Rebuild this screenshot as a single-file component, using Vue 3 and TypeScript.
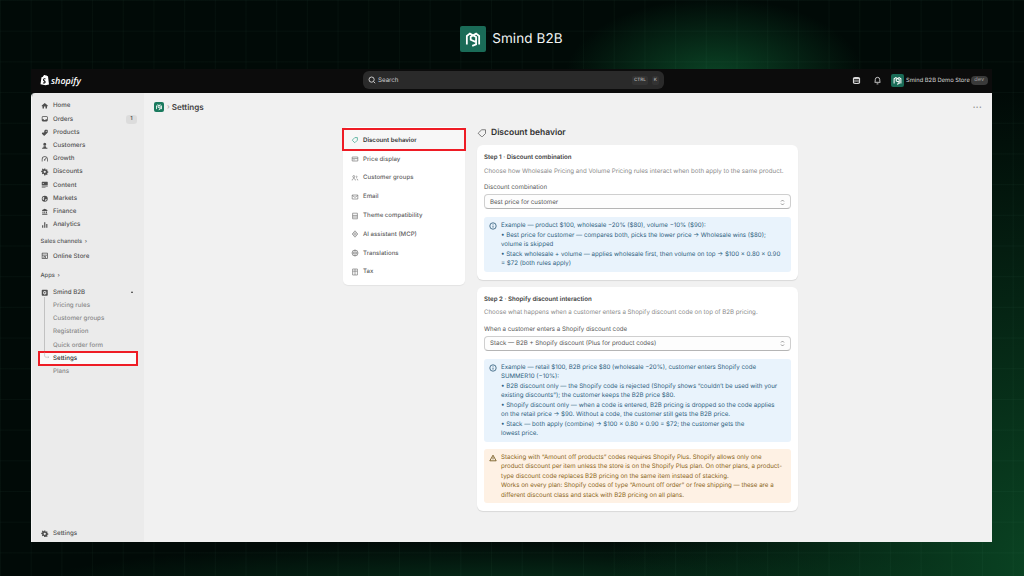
<template>
  <div class="page">
    <header class="brand">
      <span class="brand-logo">
        <svg viewBox="0 0 26 26" width="20" height="20" fill="none" stroke="#fff" stroke-width="2.300">
          <path :d="markPath" />
        </svg>
      </span>
      <span class="brand-name">Smind B2B</span>
    </header>

    <div class="frame">
      <div class="topbar">
        <div class="shop">
          <svg viewBox="0 0 20 22" width="10" height="12">
            <path fill="#fff" d="M3 5.500 6 4.600C6.600 2 8 .8 9.500.8c1 0 1.500.5 1.800 1.200l1.200-.3L14 3l2 .4L18 20l-7 1.500L1 19.600z" />
            <path fill="#0c0c0c" d="M11.200 8.200 10.500 10c-2-.8-3.300.1-2.500 1 1 1.100 3.600 1.500 3.300 4.300-.3 2.600-3.600 3.300-5.700 2l.6-1.900c1.200.8 3 .9 3-.3 0-1.400-3.300-1.500-3.300-4.300 0-2.700 3.100-3.900 5.300-2.600z" />
          </svg>
          <span>shopify</span>
        </div>
        <div class="search">
          <svg viewBox="0 0 20 20" width="8" height="8" fill="none" stroke="#ddd" stroke-width="2.200">
            <circle cx="9" cy="9" r="6.500" />
            <path d="m14 14 4 4" />
          </svg>
          <span class="search-text">Search</span>
          <span class="key">CTRL</span>
          <span class="key">K</span>
        </div>
        <div class="top-right">
          <svg class="db" viewBox="0 0 20 20" width="9" height="9">
            <path fill="#d8d8d8" fill-rule="evenodd" d="M10 2c4.500 0 8 1 8 3v10c0 2-3.500 3-8 3s-8-1-8-3V5c0-2 3.500-3 8-3zM4.500 7v3h11V7zm0 5v2.500c1 .7 3 1 5.500 1s4.500-.3 5.500-1V12z" />
          </svg>
          <svg class="bell" viewBox="0 0 20 20" width="9" height="9" fill="none" stroke="#d8d8d8" stroke-width="2">
            <path d="M4 14c1-1.500 1-3 1-6a5 5 0 0 1 10 0c0 3 0 4.500 1 6zM8 17.500h4" />
          </svg>
          <span class="store-logo">
            <svg viewBox="0 0 26 26" width="11" height="11" fill="none" stroke="#fff" stroke-width="2.500">
              <path :d="markPath" />
            </svg>
          </span>
          <span class="store-name">Smind B2B Demo Store</span>
          <span class="dev">dev</span>
        </div>
      </div>

      <div class="body">
        <aside class="sidebar">
          <a v-for="item in mainNav" :key="item.label" class="nav-row">
            <svg class="nav-icon" viewBox="0 0 20 20"><path fill-rule="evenodd" :d="item.icon" /></svg>
            <span>{{ item.label }}</span>
            <span v-if="item.badge" class="badge">{{ item.badge }}</span>
          </a>

          <div class="section-label first">Sales channels <i>›</i></div>
          <a class="nav-row">
            <svg class="nav-icon" viewBox="0 0 20 20"><path fill-rule="evenodd" :d="storeIcon" /></svg>
            <span>Online Store</span>
          </a>

          <div class="section-label second">Apps <i>›</i></div>
          <a class="nav-row app-row">
            <svg class="nav-icon" viewBox="0 0 20 20"><path fill-rule="evenodd" :d="appIcon" /></svg>
            <span>Smind B2B</span>
            <span class="pin"></span>
          </a>
          <div class="subnav">
            <a v-for="item in appNav" :key="item" class="sub-row" :class="{ active: item === 'Settings' }">
              <svg v-if="item === 'Settings'" class="elbow" viewBox="0 0 10 12" width="6" height="8" fill="none" stroke="#b5b5b5" stroke-width="1">
                <path d="M1 0v6c0 1 1 2 2 2h5M6.500 6.500 8 8 6.500 9.500" />
              </svg>
              {{ item }}
            </a>
          </div>

          <a class="nav-row foot">
            <svg class="nav-icon" viewBox="0 0 20 20"><path fill-rule="evenodd" :d="gearIcon" /></svg>
            <span>Settings</span>
          </a>
        </aside>

        <main class="content">
          <div class="title-bar">
            <span class="title-logo">
              <svg viewBox="0 0 26 26" width="8" height="8" fill="none" stroke="#fff" stroke-width="2.800">
                <path :d="markPath" />
              </svg>
            </span>
            <span class="crumb">›</span>
            <h1>Settings</h1>
            <span class="more">···</span>
          </div>

          <div class="layout">
            <nav class="side-card">
              <a v-for="(item, i) in settingsNav" :key="item.label" class="set-row" :class="{ current: i === 0 }">
                <svg viewBox="0 0 20 20" width="8" height="8" fill="none" :stroke="i === 0 ? '#2a9d84' : '#777'" stroke-width="1.700">
                  <path :d="item.icon" />
                </svg>
                <span>{{ item.label }}</span>
              </a>
            </nav>

            <section class="panel">
              <h2>
                <svg viewBox="0 0 20 20" width="10" height="10" fill="none" stroke="#555" stroke-width="1.500">
                  <path d="M3 9.500 9.500 3.500H17v7.500l-6 6a1.500 1.500 0 0 1-2 0l-6-5.500a1.500 1.500 0 0 1 0-2z" />
                </svg>
                Discount behavior
              </h2>

              <div class="card">
                <h3>Step 1 · Discount combination</h3>
                <p class="desc">Choose how Wholesale Pricing and Volume Pricing rules interact when both apply to the same product.</p>
                <label>Discount combination</label>
                <div class="select">
                  <span>Best price for customer</span>
                  <svg viewBox="0 0 10 14" width="5" height="7" fill="none" stroke="#666" stroke-width="1.300">
                    <path d="M2 5l3-3 3 3M2 9l3 3 3-3" />
                  </svg>
                </div>
                <div class="note info">
                  <svg viewBox="0 0 20 20" width="8" height="8" fill="none" stroke="#1f4f6f" stroke-width="1.900">
                    <circle cx="10" cy="10" r="8" />
                    <path d="M10 9v5M10 5.500v1.500" />
                  </svg>
                  <p>
                    Example — product $100, wholesale −20% ($80), volume −10% ($90):<br />
                    • Best price for customer — compares both, picks the lower price → Wholesale wins ($80);<br />
                    volume is skipped<br />
                    • Stack wholesale + volume — applies wholesale first, then volume on top → $100 × 0.80 × 0.90<br />
                    = $72 (both rules apply)
                  </p>
                </div>
              </div>

              <div class="card">
                <h3>Step 2 · Shopify discount interaction</h3>
                <p class="desc">Choose what happens when a customer enters a Shopify discount code on top of B2B pricing.</p>
                <label>When a customer enters a Shopify discount code</label>
                <div class="select">
                  <span>Stack — B2B + Shopify discount (Plus for product codes)</span>
                  <svg viewBox="0 0 10 14" width="5" height="7" fill="none" stroke="#666" stroke-width="1.300">
                    <path d="M2 5l3-3 3 3M2 9l3 3 3-3" />
                  </svg>
                </div>
                <div class="note info">
                  <svg viewBox="0 0 20 20" width="8" height="8" fill="none" stroke="#1f4f6f" stroke-width="1.900">
                    <circle cx="10" cy="10" r="8" />
                    <path d="M10 9v5M10 5.500v1.500" />
                  </svg>
                  <p>
                    Example — retail $100, B2B price $80 (wholesale −20%), customer enters Shopify code<br />
                    SUMMER10 (−10%):<br />
                    • B2B discount only — the Shopify code is rejected (Shopify shows “couldn’t be used with your<br />
                    existing discounts”); the customer keeps the B2B price $80.<br />
                    • Shopify discount only — when a code is entered, B2B pricing is dropped so the code applies<br />
                    on the retail price → $90. Without a code, the customer still gets the B2B price.<br />
                    • Stack — both apply (combine) → $100 × 0.80 × 0.90 = $72; the customer gets the<br />
                    lowest price.
                  </p>
                </div>
                <div class="note warn">
                  <svg viewBox="0 0 20 20" width="8" height="8" fill="none" stroke="#5e4200" stroke-width="1.900">
                    <path d="M10 3 18 17H2z" stroke-linejoin="round" />
                    <path d="M10 8v4.500M10 14v1" />
                  </svg>
                  <p>
                    Stacking with “Amount off products” codes requires Shopify Plus. Shopify allows only one<br />
                    product discount per item unless the store is on the Shopify Plus plan. On other plans, a product-<br />
                    type discount code replaces B2B pricing on the same item instead of stacking.<br />
                    Works on every plan: Shopify codes of type “Amount off order” or free shipping — these are a<br />
                    different discount class and stack with B2B pricing on all plans.
                  </p>
                </div>
              </div>
            </section>
          </div>
        </main>
      </div>
    </div>
  </div>
</template>

<script setup lang="ts">
interface NavItem {
  label: string
  icon: string
  badge?: string
}

const markPath = 'M5 20V9l4-3 8 4.500V20l-5 2M21 20V9l-4-3-7 4v4l7 3'

const gearIcon =
  'M8.500 1.500h3l.5 2.300 1.600.7 2-1.300 2.100 2.100-1.300 2 .7 1.600 2.300.5v3l-2.300.5-.7 1.600 1.300 2-2.100 2.100-2-1.300-1.600.7-.5 2.300h-3L8 16.200l-1.600-.7-2 1.300-2.100-2.100 1.300-2-.7-1.600-2.300-.5v-3l2.300-.5.7-1.600-1.300-2 2.100-2.100 2 1.300L8 3.800zM10 7a3 3 0 1 0 0 6 3 3 0 0 0 0-6z'
const storeIcon =
  'M3 2h14a1 1 0 0 1 1 1v14a1 1 0 0 1-1 1H3a1 1 0 0 1-1-1V3a1 1 0 0 1 1-1zm1 2v3h12V4zm0 5v7h3v-5h6v5h3V9zm5 4v3h2v-3z'
const appIcon =
  'M4 2h12a2 2 0 0 1 2 2v12a2 2 0 0 1-2 2H4a2 2 0 0 1-2-2V4a2 2 0 0 1 2-2zm6 3-4 2.500v5L10 15l4-2.500v-5zm0 3a2 2 0 1 1 0 4 2 2 0 0 1 0-4z'

const mainNav: NavItem[] = [
  { label: 'Home', icon: 'M10 2.500 18 9v2h-2v6h-4v-5H8v5H4v-6H2V9z' },
  {
    label: 'Orders',
    badge: '1',
    icon: 'M5 3h10a3 3 0 0 1 3 3v8a3 3 0 0 1-3 3H5a3 3 0 0 1-3-3V6a3 3 0 0 1 3-3zm-1 8h3.500l1 2h3l1-2H16V6a1 1 0 0 0-1-1H5a1 1 0 0 0-1 1z',
  },
  {
    label: 'Products',
    icon: 'M11 2h5a2 2 0 0 1 2 2v5l-8 8.500a2 2 0 0 1-2.800 0L3 13.500a2 2 0 0 1 0-2.800l2-2 3 1 1-3-1-1zm3 2.500a1.500 1.500 0 1 0 0 3 1.500 1.500 0 0 0 0-3z',
  },
  { label: 'Customers', icon: 'M10 2a4 4 0 1 1 0 8 4 4 0 0 1 0-8zM7 11h6l1 4h3v3H3v-3h3z' },
  {
    label: 'Growth',
    icon: 'M10 3a8 8 0 0 1 8 8v6h-2v-6a6 6 0 0 0-12 0v6H2v-6a8 8 0 0 1 8-8zm3.500 4 1 1-3 4a2 2 0 1 1-2-1z',
  },
  { label: 'Discounts', icon: gearIcon },
  {
    label: 'Content',
    icon: 'M3 2h14a1 1 0 0 1 1 1v8a1 1 0 0 1-1 1H3a1 1 0 0 1-1-1V3a1 1 0 0 1 1-1zm3 3a1.500 1.500 0 1 0 0 3 1.500 1.500 0 0 0 0-3zM2 14h16v1.500H2zm0 2.500h10V18H2z',
  },
  {
    label: 'Markets',
    icon: 'M10 2a8 8 0 1 1 0 16 8 8 0 0 1 0-16zM7 4.500A6 6 0 0 0 4.500 12l3 1 1-3-2-2 3-1zm5 6-1.500 5.500a6 6 0 0 0 5-5z',
  },
  { label: 'Finance', icon: 'M10 2l7 3v3H3V5zM4 9.500h2.500V14H4zm4.700 0h2.600V14H8.700zm4.800 0H16V14h-2.500zM3 15h14v3H3z' },
  { label: 'Analytics', icon: 'M3 11h3v7H3zM8.500 3h3v15h-3zM14 8h3v10h-3z' },
]

const appNav = ['Pricing rules', 'Customer groups', 'Registration', 'Quick order form', 'Settings', 'Plans']

const settingsNav: NavItem[] = [
  { label: 'Discount behavior', icon: 'M4 9.500 9.500 4H16v6.500L10.500 16a1.500 1.500 0 0 1-2 0L4 11.500a1.500 1.500 0 0 1 0-2z' },
  { label: 'Price display', icon: 'M3 5h14v10H3zM3 9h14M6 12h3' },
  { label: 'Customer groups', icon: 'M7 4a2.500 2.500 0 1 1 0 5 2.500 2.500 0 0 1 0-5zM3 16c0-3 1.500-4.500 4-4.500s4 1.500 4 4.500M13 5a2 2 0 0 1 0 4M14 12c2 .3 3 1.800 3 4' },
  { label: 'Email', icon: 'M3 5h14v10H3zM3 6l7 5 7-5' },
  { label: 'Theme compatibility', icon: 'M4 3h12v14H4zM4 8.500h12M4 12.500h12' },
  { label: 'AI assistant (MCP)', icon: 'M10 2l7 8-7 8-7-8zM10 7a3 3 0 1 0 0 6 3 3 0 0 0 0-6z' },
  { label: 'Translations', icon: 'M10 2.500a7.500 7.500 0 1 1 0 15 7.500 7.500 0 0 1 0-15zM2.500 10h15M10 2.500c-4 4-4 11 0 15M10 2.500c4 4 4 11 0 15' },
  { label: 'Tax', icon: 'M4 2.500h12v15H4zM10 2.500v15M4 8h12M7 12h.500' },
]
</script>

<style>
html,
body {
  margin: 0;
  background: #010806;
}
</style>

<style scoped>
* {
  box-sizing: border-box;
}

.page {
  width: 1024px;
  height: 576px;
  overflow: hidden;
  padding: 0 32px 34px 31px;
  display: flex;
  flex-direction: column;
  font-family: Inter, "Liberation Sans", sans-serif;
  text-rendering: geometricPrecision;
  background-color: #010a07;
  background-image:
    linear-gradient(rgba(120, 200, 160, 0.04) 1px, transparent 1px),
    linear-gradient(90deg, rgba(120, 200, 160, 0.04) 1px, transparent 1px),
    radial-gradient(ellipse 150px 80px at 715px 78px, #0b4526 0%, rgba(11, 69, 38, 0) 100%),
    radial-gradient(ellipse 430px 480px at 1040px 570px, #0a4423 0%, rgba(10, 68, 35, 0) 100%),
    radial-gradient(ellipse 500px 50px at 520px 590px, #07301b 0%, rgba(7, 48, 27, 0) 100%);
  background-size: 30.7px 30.7px, 30.7px 30.7px, 100% 100%, 100% 100%, 100% 100%;
}

.brand {
  height: 69px;
  flex-shrink: 0;
  display: flex;
  align-items: center;
  justify-content: center;
  gap: 6px;
  padding: 9px 0 0;
}

.brand-logo {
  width: 26px;
  height: 26px;
  border-radius: 2px;
  background: #1a6b57;
  display: flex;
  align-items: center;
  justify-content: center;
}

.brand-name {
  color: #f2f5f4;
  font-size: 13.500px;
  letter-spacing: 0.1px;
}

.frame {
  flex: 1;
  min-height: 0;
  display: flex;
  flex-direction: column;
}

.topbar {
  height: 24px;
  flex-shrink: 0;
  background: #0c0c0c;
  display: grid;
  grid-template-columns: 332px 301px 1fr;
  align-items: center;
  padding-bottom: 2px;
}

.shop {
  display: flex;
  align-items: center;
  gap: 1px;
  padding-left: 9px;
  color: #fff;
  font-family: "Open Sans", sans-serif;
  font-size: 9px;
  font-style: italic;
  font-weight: 600;
}

.search {
  height: 18px;
  border-radius: 6px;
  background: #2a2a2a;
  display: flex;
  align-items: center;
  padding: 0 5px;
  color: #cfcfcf;
  font-size: 6.200px;
}

.search-text {
  flex: 1;
  margin-left: 2px;
}

.key {
  font-size: 4.500px;
  font-weight: 600;
  color: #a8a8a8;
  background: #333;
  border-radius: 2px;
  padding: 2px 2px;
  margin-left: 4px;
}

.top-right {
  display: flex;
  align-items: center;
  padding-left: 188px;
}

.bell {
  margin-left: 12px;
}

.store-logo {
  width: 13px;
  height: 13px;
  border-radius: 2px;
  background: #1a6b57;
  margin-left: 9px;
  display: flex;
  align-items: center;
  justify-content: center;
}

.store-name {
  color: #d8d8d8;
  font-size: 5.800px;
  white-space: nowrap;
  margin-left: 2px;
}

.dev {
  margin-left: 1px;
  padding: 1px 3.500px;
  height: 9px;
  line-height: 7px;
  border-radius: 4px;
  background: #3a3a3a;
  color: #a0a0a0;
  font-size: 5.600px;
}

.body {
  flex: 1;
  min-height: 0;
  display: flex;
  border-radius: 4px 0 0 0;
  overflow: hidden;
  border-left: 1px solid #f6f6f6;
}

.sidebar {
  width: 112px;
  flex-shrink: 0;
  background: #ebebeb;
  display: flex;
  flex-direction: column;
  padding: 6.400px 7px 2px 7px;
  font-size: 6.200px;
  color: #555;
}

.nav-row {
  height: 13.200px;
  flex-shrink: 0;
  display: flex;
  align-items: center;
  gap: 4.500px;
  padding-left: 2px;
  font-weight: 500;
}

.nav-icon {
  width: 7.500px;
  height: 7.500px;
  fill: #4f4f4f;
  flex-shrink: 0;
}

.badge {
  margin-left: auto;
  width: 11px;
  height: 9px;
  border-radius: 3px;
  background: #dcdcdc;
  text-align: center;
  line-height: 9px;
  font-size: 5.500px;
  font-weight: 600;
}

.section-label {
  height: 13.200px;
  line-height: 13.200px;
  flex-shrink: 0;
  padding-left: 1.500px;
  font-size: 5.800px;
  font-weight: 500;
  color: #555;
}

.section-label i {
  font-style: normal;
  margin-left: 1px;
}

.section-label.first {
  margin-top: 4px;
}

.section-label.first + .nav-row {
  margin-top: 1px;
}

.section-label.second {
  margin-top: 6.500px;
}

.app-row {
  margin-top: 3.500px;
}

.pin {
  margin-left: auto;
  margin-right: 4px;
  width: 0;
  height: 0;
  border-left: 1.500px solid transparent;
  border-right: 1.500px solid transparent;
  border-bottom: 2px solid #333;
}

.subnav {
  position: relative;
}

.subnav::before {
  content: '';
  position: absolute;
  left: 5px;
  top: -2px;
  height: 54px;
  width: 1px;
  background: #c2c2c2;
}

.sub-row {
  position: relative;
  height: 13.200px;
  display: flex;
  align-items: center;
  padding-left: 14px;
  color: #8a8a8a;
  font-weight: 500;
}

.sub-row.active {
  color: #333;
  background: #fafafa;
  outline: 2px solid #ee1c25;
  outline-offset: -1px;
}

.elbow {
  position: absolute;
  left: 5px;
  top: 0;
}

.foot {
  margin-top: auto;
}

.content {
  flex: 1;
  min-width: 0;
  background: #f1f1f1;
  padding: 0 10px;
}

.title-bar {
  height: 27px;
  display: flex;
  align-items: center;
}

.title-logo {
  width: 10px;
  height: 10px;
  border-radius: 2px;
  background: #1a7a5e;
  display: flex;
  align-items: center;
  justify-content: center;
}

.crumb {
  margin: 0 2px 0 3px;
  font-size: 7px;
  color: #999;
}

h1 {
  margin: 0;
  font-size: 8.100px;
  font-weight: 600;
  color: #444;
}

.more {
  margin-left: auto;
  font-weight: 700;
  font-size: 8px;
  letter-spacing: 0.4px;
  color: #8a8a8a;
}

.layout {
  display: flex;
  align-items: flex-start;
  gap: 12px;
  padding-left: 189px;
  margin-top: 7px;
}

.side-card {
  width: 122px;
  background: #fff;
  border-radius: 5px;
  padding: 2px 0 4px;
  display: flex;
  flex-direction: column;
  box-shadow: 0 1px 1px rgba(0, 0, 0, 0.06);
  flex-shrink: 0;
}

.set-row {
  height: 18.800px;
  display: flex;
  align-items: center;
  gap: 4px;
  padding: 1.500px 0 0 8px;
  font-size: 6.100px;
  font-weight: 500;
  color: #5f5f5f;
}

.set-row.current {
  height: 20.500px;
  margin-bottom: -0.500px;
  color: #333;
  font-weight: 600;
  background: #f7f7f7;
  outline: 2px solid #ee1c25;
  outline-offset: -1px;
}

.panel {
  width: 321px;
  flex-shrink: 0;
  display: flex;
  flex-direction: column;
  gap: 7px;
}

h2 {
  margin: 0;
  height: 11px;
  display: flex;
  align-items: center;
  gap: 4px;
  font-size: 8.500px;
  font-weight: 600;
  color: #303030;
}

.card {
  background: #fff;
  border-radius: 6px;
  padding: 8px 7px 8px;
  box-shadow: 0 1px 1px rgba(0, 0, 0, 0.1);
}

h3 {
  margin: 0;
  font-size: 6.150px;
  line-height: 10px;
  font-weight: 600;
  color: #3d3d3d;
}

.desc {
  margin: 3.500px 0 0;
  font-size: 6.150px;
  line-height: 10px;
  color: #8a8a8a;
}

label {
  display: block;
  margin-top: 6.500px;
  font-size: 6.150px;
  line-height: 10px;
  color: #555;
}

.select {
  height: 15px;
  margin-top: 1px;
  border: 1px solid #cfcfcf;
  border-bottom-color: #b5b5b5;
  border-radius: 4px;
  background: #fdfdfd;
  display: flex;
  align-items: center;
  justify-content: space-between;
  padding: 1px 5px 0;
  font-size: 6.150px;
  color: #555;
}

.note {
  margin-top: 8px;
  border-radius: 3px;
  padding: 4px 6px 3px 5px;
  display: flex;
  align-items: flex-start;
  gap: 4px;
}

.note svg {
  flex-shrink: 0;
  margin-top: 1px;
}

.note p {
  margin: 0;
  font-size: 6.150px;
  line-height: 9.500px;
  white-space: nowrap;
}

.info {
  background: #e9f3fc;
  color: #2e5f80;
}

.warn {
  margin-top: 7px;
  background: #fef1e4;
  color: #8a6518;
}
</style>
